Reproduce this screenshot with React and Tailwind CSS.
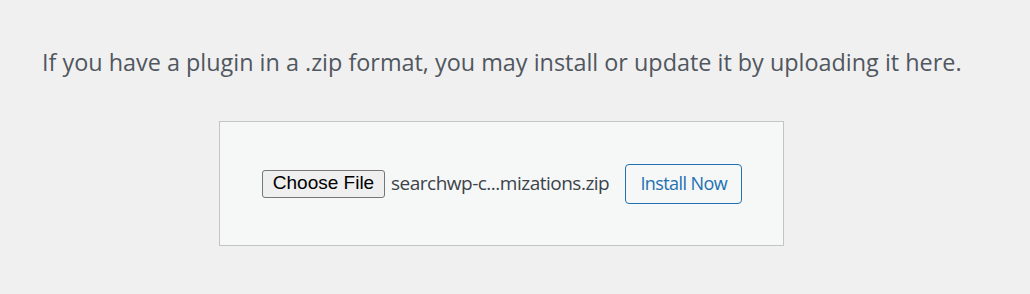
export default function App() {
  return (
    <div className="w-[1030px] h-[294px] bg-[#f0f0f1] overflow-hidden" style={{ fontFamily: '"Open Sans", "Noto Sans", sans-serif' }}>
      <p className="pt-[47px] pl-[42px] text-[23.4px] leading-[30px] text-[#50575e] whitespace-nowrap">
        If you have a plugin in a .zip format, you may install or update it by uploading it here.
      </p>
      <div className="mt-[44px] ml-[219px] w-[565px] h-[125px] bg-[#f6f7f7] border border-[#c3c4c7] flex items-center pl-[42px]">
        <div className="flex items-center">
          <div className="h-[28px] w-[123px] flex items-center justify-center bg-[#efefef] border border-[#767676] rounded-[3px] text-[19px] text-black" style={{ fontFamily: '"Liberation Sans", Arial, sans-serif' }}>
            Choose File
          </div>
          <span className="ml-[6px] text-[19px] tracking-[-0.5px] text-[#3c434a]">searchwp-c...mizations.zip</span>
        </div>
        <div className="ml-[16px] h-[40px] w-[117px] flex items-center justify-center border border-[#2271b1] rounded-[4px] text-[#2271b1] text-[18px] tracking-[-0.6px] bg-[#f6f7f7]">
          Install Now
        </div>
      </div>
    </div>
  );
}
